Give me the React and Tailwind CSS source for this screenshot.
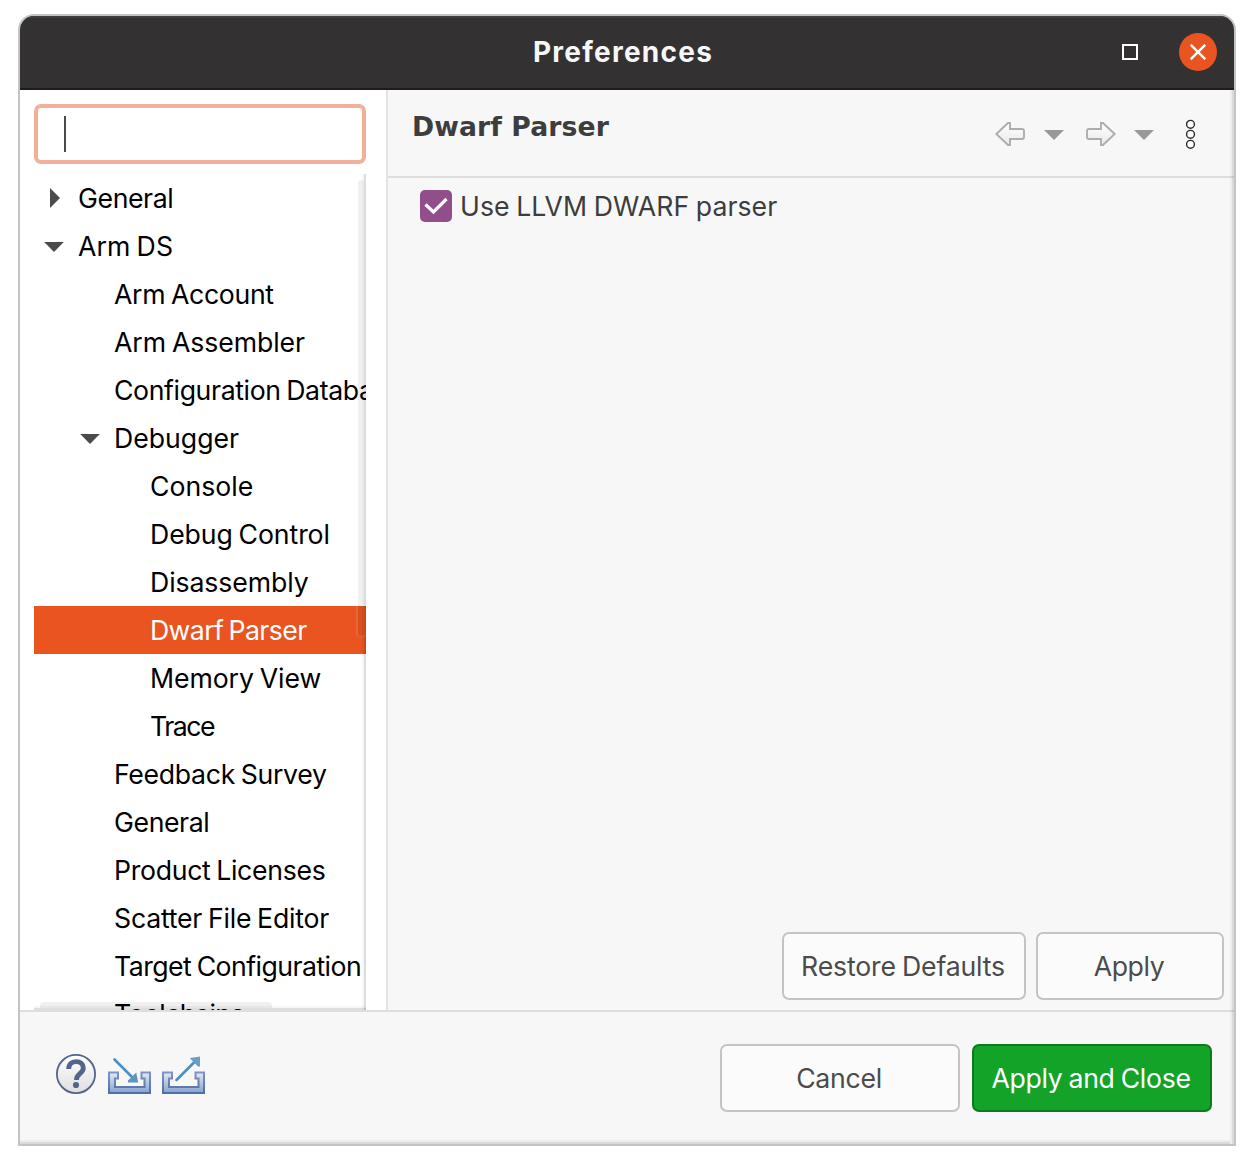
const TREE = [
  { label: 'General', level: 0, state: 'closed', tracking: 'tracking-[-0.4px]' },
  { label: 'Arm DS', level: 0, state: 'open', tracking: 'tracking-[0.1px]' },
  { label: 'Arm Account', level: 1, tracking: 'tracking-[-0.32px]' },
  { label: 'Arm Assembler', level: 1, tracking: 'tracking-[-0.07px]' },
  { label: 'Configuration Database', level: 1, tracking: 'tracking-[-0.38px]' },
  { label: 'Debugger', level: 1, state: 'open', tracking: 'tracking-[0px]' },
  { label: 'Console', level: 2, tracking: 'tracking-[0px]' },
  { label: 'Debug Control', level: 2, tracking: 'tracking-[-0.1px]' },
  { label: 'Disassembly', level: 2, tracking: 'tracking-[-0.1px]' },
  { label: 'Dwarf Parser', level: 2, selected: true, tracking: 'tracking-[-0.62px]' },
  { label: 'Memory View', level: 2, tracking: 'tracking-[-0.09px]' },
  { label: 'Trace', level: 2, tracking: 'tracking-[-1.5px]' },
  { label: 'Feedback Survey', level: 1, tracking: 'tracking-[-0.31px]' },
  { label: 'General', level: 1, tracking: 'tracking-[-0.4px]' },
  { label: 'Product Licenses', level: 1, tracking: 'tracking-[-0.31px]' },
  { label: 'Scatter File Editor', level: 1, tracking: 'tracking-[-0.21px]' },
  { label: 'Target Configuration', level: 1, tracking: 'tracking-[-0.54px]' },
  { label: 'Toolchains', level: 1, tracking: 'tracking-[-0.58px]' },
];

const INDENT = ['pl-2', 'pl-[44px]', 'pl-20'];

function Twisty({ state }) {
  return (
    <svg className="mr-3.5 h-6 w-[22px] shrink-0" viewBox="0 0 22 24" fill="#4b4b4b">
      {state === 'closed' && <path d="M8 2v20l10-10z" />}
      {state === 'open' && <path d="M2.200 8h19.600L12 18z" />}
    </svg>
  );
}

function TreeRow({ label, level, state, selected, tracking }) {
  return (
    <div className={`flex h-12 shrink-0 items-center whitespace-nowrap ${INDENT[level]} ${tracking} ${selected ? 'bg-[#e95420] text-white' : 'text-black'}`}>
      <Twisty state={state} />
      <span>{label}</span>
    </div>
  );
}

function Sidebar() {
  return (
    <aside className="flex w-[368px] shrink-0 flex-col border-r-2 border-[#e3e3e3] bg-white pt-3.5 pr-5 pl-3.5">
      <div className="flex h-[60px] shrink-0 items-center rounded-[7px] border-4 border-[#f2b09a] pl-[26px]">
        <div className="h-9 w-0.5 bg-[#4b4b4b]" />
      </div>
      <div className="relative mt-2.5 flex min-h-0 flex-1 flex-col overflow-hidden [word-spacing:-1.5px]">
        {TREE.map((row, i) => (
          <TreeRow key={i} {...row} />
        ))}
        <div className="absolute top-0 right-0 h-full w-1 border-r-2 border-black/10 bg-black/[0.03]" />
        <div className="absolute top-1.5 right-0.5 h-[458px] w-1.5 rounded-full bg-black/[0.06]" />
        <div className="absolute top-[432px] right-0 h-[32px] w-2.5 rounded-b-md border-b-2 border-l-2 border-white/10" />
        <div className="absolute bottom-0 left-0 h-1 w-full border-b-2 border-black/[0.09] bg-black/[0.04]" />
        <div className="absolute bottom-0.5 left-1.5 h-1.5 w-[232px] rounded-t bg-black/[0.06]" />
      </div>
    </aside>
  );
}

function NavArrow({ flip }) {
  return (
    <svg className={`h-7 w-[30px] ${flip ? '-scale-x-100' : ''}`} viewBox="0 0 30 28">
      <defs>
        <linearGradient id="arrowFill" x1="0" y1="0" x2="0" y2="1">
          <stop offset="0" stopColor="#fff" />
          <stop offset="1" stopColor="#e9e9e9" />
        </linearGradient>
      </defs>
      <path d="M1.300 14 13 3h2v6h12q2 0 2 2v6q0 2-2 2H15v6h-2z" fill="url(#arrowFill)" stroke="#adadad" strokeWidth="1.900" />
    </svg>
  );
}

function Caret() {
  return (
    <svg className="h-3 w-5" viewBox="0 0 20 12">
      <path d="M0 2h20L10 12z" fill="#999" />
    </svg>
  );
}

function Button({ children, className }) {
  return (
    <button className={`flex h-[68px] items-center justify-center rounded-[7px] border-2 pr-0.5 whitespace-nowrap [word-spacing:-1px] ${className}`}>
      {children}
    </button>
  );
}

function HelpIcon() {
  return (
    <svg className="h-10 w-10" viewBox="0 0 40 40">
      <defs>
        <linearGradient id="helpFill" x1="0" y1="0" x2="0" y2="1">
          <stop offset="0" stopColor="#fff" />
          <stop offset="1" stopColor="#dedede" />
        </linearGradient>
      </defs>
      <circle cx="20" cy="20" r="19.100" fill="url(#helpFill)" stroke="#52658a" strokeWidth="1.800" />
      <path d="M12.700 15C12.700 10 15.700 7.600 20 7.600c4.600 0 7.300 2.500 7.300 6.300 0 5.800-6.800 5.300-6.800 12.100" fill="none" stroke="#52658a" strokeWidth="4.900" />
      <circle cx="20" cy="31" r="3.100" fill="#52658a" />
    </svg>
  );
}

function TrayIcon({ out }) {
  return (
    <svg className="h-10 w-11" viewBox="0 0 44 40">
      <defs>
        <linearGradient id="trayFill" x1="0" y1="0" x2="0" y2="1">
          <stop offset="0" stopColor="#e4eaf5" />
          <stop offset="1" stopColor="#86a2d0" />
        </linearGradient>
        <linearGradient id="trayLine" x1="0" y1="0" x2="0" y2="1">
          <stop offset="0" stopColor="#7f94c4" />
          <stop offset="1" stopColor="#4f6fa5" />
        </linearGradient>
      </defs>
      <path d="M1 18.500H10V24.500H7V33H36.500V24.500H33.500V18.500H42V39H1z" fill="url(#trayFill)" stroke="url(#trayLine)" strokeWidth="2" />
      {out ? (
        <>
          <path d="M14.500 26 33 7.500" stroke="#4a90c4" strokeWidth="2.600" strokeLinecap="round" />
          <path d="M28 4 38 2.500V12.500H36L28.500 5z" fill="#6f9dc2" />
        </>
      ) : (
        <>
          <path d="M6.500 5.500 25 24" stroke="#4a90c4" strokeWidth="2.600" strokeLinecap="round" />
          <path d="M28.200 18.500 30.200 28.500H20V26.500z" fill="#5f95bd" />
        </>
      )}
    </svg>
  );
}

export default function App() {
  return (
    <div className="h-[1164px] w-[1254px] overflow-hidden bg-white pt-3.5 pl-[18px] font-['Inter',sans-serif] text-[26.67px] leading-9">
      <div className="relative flex h-[1132px] w-[1218px] flex-col overflow-hidden rounded-t-2xl border-2 border-[#c4c4c4] bg-[#f7f7f7]">
        <header className="flex h-[74px] shrink-0 items-center border-t-2 border-b-2 border-t-[#3f3e3e] border-b-[#1e1c1d] bg-[#333132] pb-0.5">
          <div className="w-[172px]" />
          <h1 className="flex-1 text-center text-[28px] font-bold tracking-[1.25px] text-[#f7f7f7]">Preferences</h1>
          <div className="flex w-[180px] items-center justify-end gap-[41px] pr-[17px]">
            <div className="h-4 w-4 border-2 border-white" />
            <div className="flex h-[38px] w-[38px] items-center justify-center rounded-full bg-[#e95420]">
              <svg className="h-4 w-4" viewBox="0 0 16 16" stroke="#fff" strokeWidth="2.400">
                <path d="M.7.7l14.600 14.600M15.300.7.7 15.300" />
              </svg>
            </div>
          </div>
        </header>

        <div className="flex min-h-0 flex-1">
          <Sidebar />
          <main className="flex flex-1 flex-col">
            <div className="flex h-[88px] shrink-0 justify-between border-b-2 border-[#dedede] pr-[38px] pl-6">
              <h2 className="pt-[19px] font-['DejaVu_Sans',sans-serif] text-[26.67px] font-bold tracking-[0.09px] text-[#3d3d3d]">Dwarf Parser</h2>
              <div className="flex items-center pt-0.5">
                <NavArrow />
                <div className="mr-[22px] ml-[19px]"><Caret /></div>
                <NavArrow flip />
                <div className="mr-8 ml-[18px]"><Caret /></div>
                <svg className="h-[30px] w-2.5" viewBox="0 0 10 30" fill="#fff" stroke="#2b2b2b" strokeWidth="1.400">
                  <circle cx="4.500" cy="5.300" r="3.900" />
                  <circle cx="4.500" cy="15.300" r="3.900" />
                  <circle cx="4.500" cy="25.300" r="3.900" />
                </svg>
              </div>
            </div>
            <div className="flex flex-1 flex-col justify-between pt-2.5 pr-2.5 pb-2.5 pl-8">
              <label className="flex items-center gap-2 tracking-[0.05px] text-[#3d3d3d] [word-spacing:-1px]">
                <span className="flex h-8 w-8 items-center justify-center rounded-[5px] bg-[#924d8b]">
                  <svg className="h-8 w-8" viewBox="0 0 32 32" fill="none" stroke="#fff" strokeWidth="3.200">
                    <path d="M5.500 14.500 13.500 22 26.500 9" />
                  </svg>
                </span>
                <span>Use LLVM DWARF parser</span>
              </label>
              <div className="flex justify-end gap-2.5 text-[#4b4b4b]">
                <Button className="w-[244px] border-[#c4c4c4] bg-[#fbfbfb] tracking-[-0.18px]">Restore Defaults</Button>
                <Button className="w-[188px] border-[#c4c4c4] bg-[#fbfbfb] tracking-[-0.4px]">Apply</Button>
              </div>
            </div>
          </main>
        </div>

        <footer className="flex h-[134px] shrink-0 items-center justify-between border-t-2 border-[#dedede] pr-[22px] pl-9">
          <div className="flex items-center gap-3 pb-2">
            <HelpIcon />
            <div className="flex gap-2.5">
              <TrayIcon />
              <TrayIcon out />
            </div>
          </div>
          <div className="flex gap-3">
            <Button className="w-[240px] border-[#c4c4c4] bg-[#fbfbfb] tracking-[-0.3px] text-[#4b4b4b]">Cancel</Button>
            <Button className="w-[240px] border-[#0e7a1d] bg-[#13a329] tracking-[-0.33px] text-white">Apply and Close</Button>
          </div>
        </footer>
        <div className="absolute top-[74px] right-0 bottom-0 w-1 border-r-2 border-black/[0.08] bg-black/[0.04]" />
        <div className="absolute right-1 bottom-0 left-0 h-1 border-b-2 border-black/[0.08] bg-black/[0.04]" />
      </div>
    </div>
  );
}
